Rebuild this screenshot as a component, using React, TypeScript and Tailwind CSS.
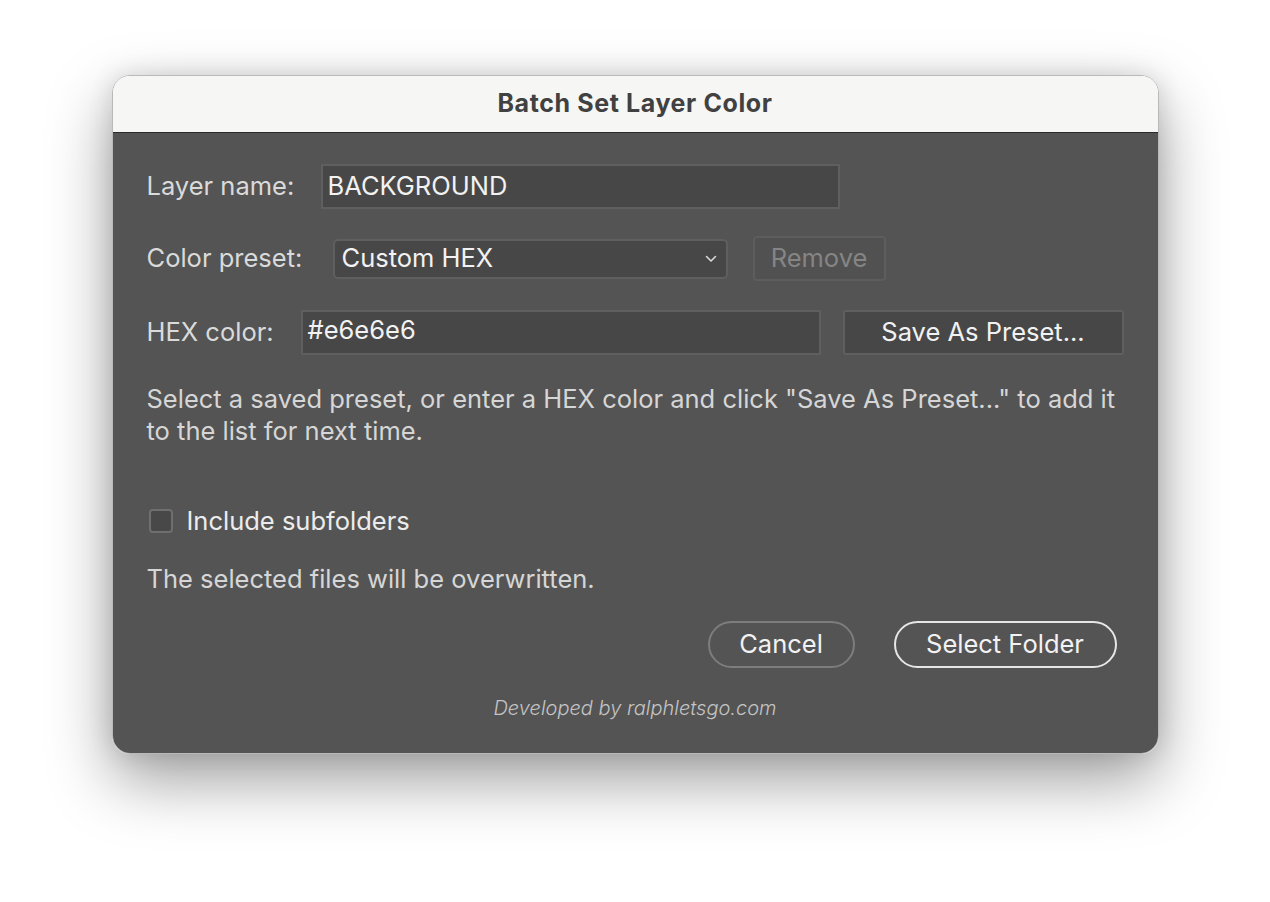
import React from 'react'

const font = { fontFamily: 'Inter, "Liberation Sans", sans-serif' }

export default function App() {
  return (
    <div className="min-h-screen w-full bg-white flex justify-center pt-[75px]" style={font}>
      <div className="w-[1047px] h-[679px] rounded-[18px] overflow-hidden border border-[#b9b9b9] shadow-[0_26px_64px_rgba(0,0,0,0.38),0_0_24px_rgba(0,0,0,0.12)] flex flex-col">
        {/* Title bar */}
        <div className="h-[57px] bg-[#f6f6f4] flex items-center justify-center border-b border-[#2a2a2a]">
          <span className="text-[25px] font-bold text-[#414141] tracking-[0.6px]">Batch Set Layer Color</span>
        </div>

        {/* Body */}
        <div className="flex-1 bg-[#545454] px-[34px] pt-[31px] flex flex-col text-[#dadada] text-[25.5px]">
          <div className="flex items-center h-[45px]">
            <span className="w-[174px] shrink-0">Layer name:</span>
            <div className="w-[519px] h-[45px] bg-[#474747] border-2 border-[#5f5f5f] flex items-center px-[5px] text-[#f2f2f2]">
              BACKGROUND
            </div>
          </div>

          <div className="flex items-center h-[45px] mt-[27px]">
            <span className="w-[186px] shrink-0">Color preset:</span>
            <div className="w-[395px] h-[40px] bg-[#474747] border-2 border-[#5f5f5f] rounded-[5px] flex items-center pl-[7px] pr-[9px] text-[#f2f2f2]">
              <span className="flex-1">Custom HEX</span>
              <svg width="12" height="8" viewBox="0 0 12 8" fill="none">
                <path d="M1.5 1.5 L6 6 L10.5 1.5" stroke="#d8d8d8" strokeWidth="1.6" strokeLinecap="round" strokeLinejoin="round" />
              </svg>
            </div>
            <div className="ml-[25px] w-[133px] h-[45px] bg-[#515151] border-2 border-[#5d5d5d] rounded-[4px] flex items-center justify-center text-[#858585]">
              Remove
            </div>
          </div>

          <div className="flex items-center h-[45px] mt-[29px]">
            <span className="w-[154px] shrink-0">HEX color:</span>
            <div className="w-[520px] h-[45px] bg-[#474747] border-2 border-[#5f5f5f] flex items-center px-[5px] pb-[4px] text-[#f2f2f2]">
              #e6e6e6
            </div>
            <div className="ml-[22px] flex-1 h-[45px] bg-[#474747] border-2 border-[#5f5f5f] rounded-[3px] flex items-center justify-center text-[#f2f2f2]">
              Save As Preset...
            </div>
          </div>

          <p className="mt-[28px] leading-[32px] text-[#d6d6d6]">
            Select a saved preset, or enter a HEX color and click "Save As Preset..." to add it to the list for next time.
          </p>

          <div className="mt-[58px] h-[32px] flex items-center">
            <div className="w-[24px] h-[24px] ml-[2px] rounded-[4px] border-2 border-[#6f6f6f] bg-[#484848]" />
            <span className="ml-[14px] text-[#ececec]">Include subfolders</span>
          </div>

          <p className="mt-[26px] h-[32px] leading-[32px] text-[#d6d6d6]">The selected files will be overwritten.</p>

          <div className="mt-[26px] flex justify-end pr-[7px]">
            <div className="w-[147px] h-[47px] rounded-full border-2 border-[#7d7d7d] flex items-center justify-center text-[#f2f2f2]">
              Cancel
            </div>
            <div className="ml-[39px] w-[223px] h-[47px] rounded-full border-2 border-[#e6e6e6] flex items-center justify-center text-[#f2f2f2]">
              Select Folder
            </div>
          </div>

          <div className="mt-[28px] h-[24px] flex items-center justify-center text-[20px] italic font-light text-[#c4c4c4]">
            Developed by ralphletsgo.com
          </div>
        </div>
      </div>
    </div>
  )
}
